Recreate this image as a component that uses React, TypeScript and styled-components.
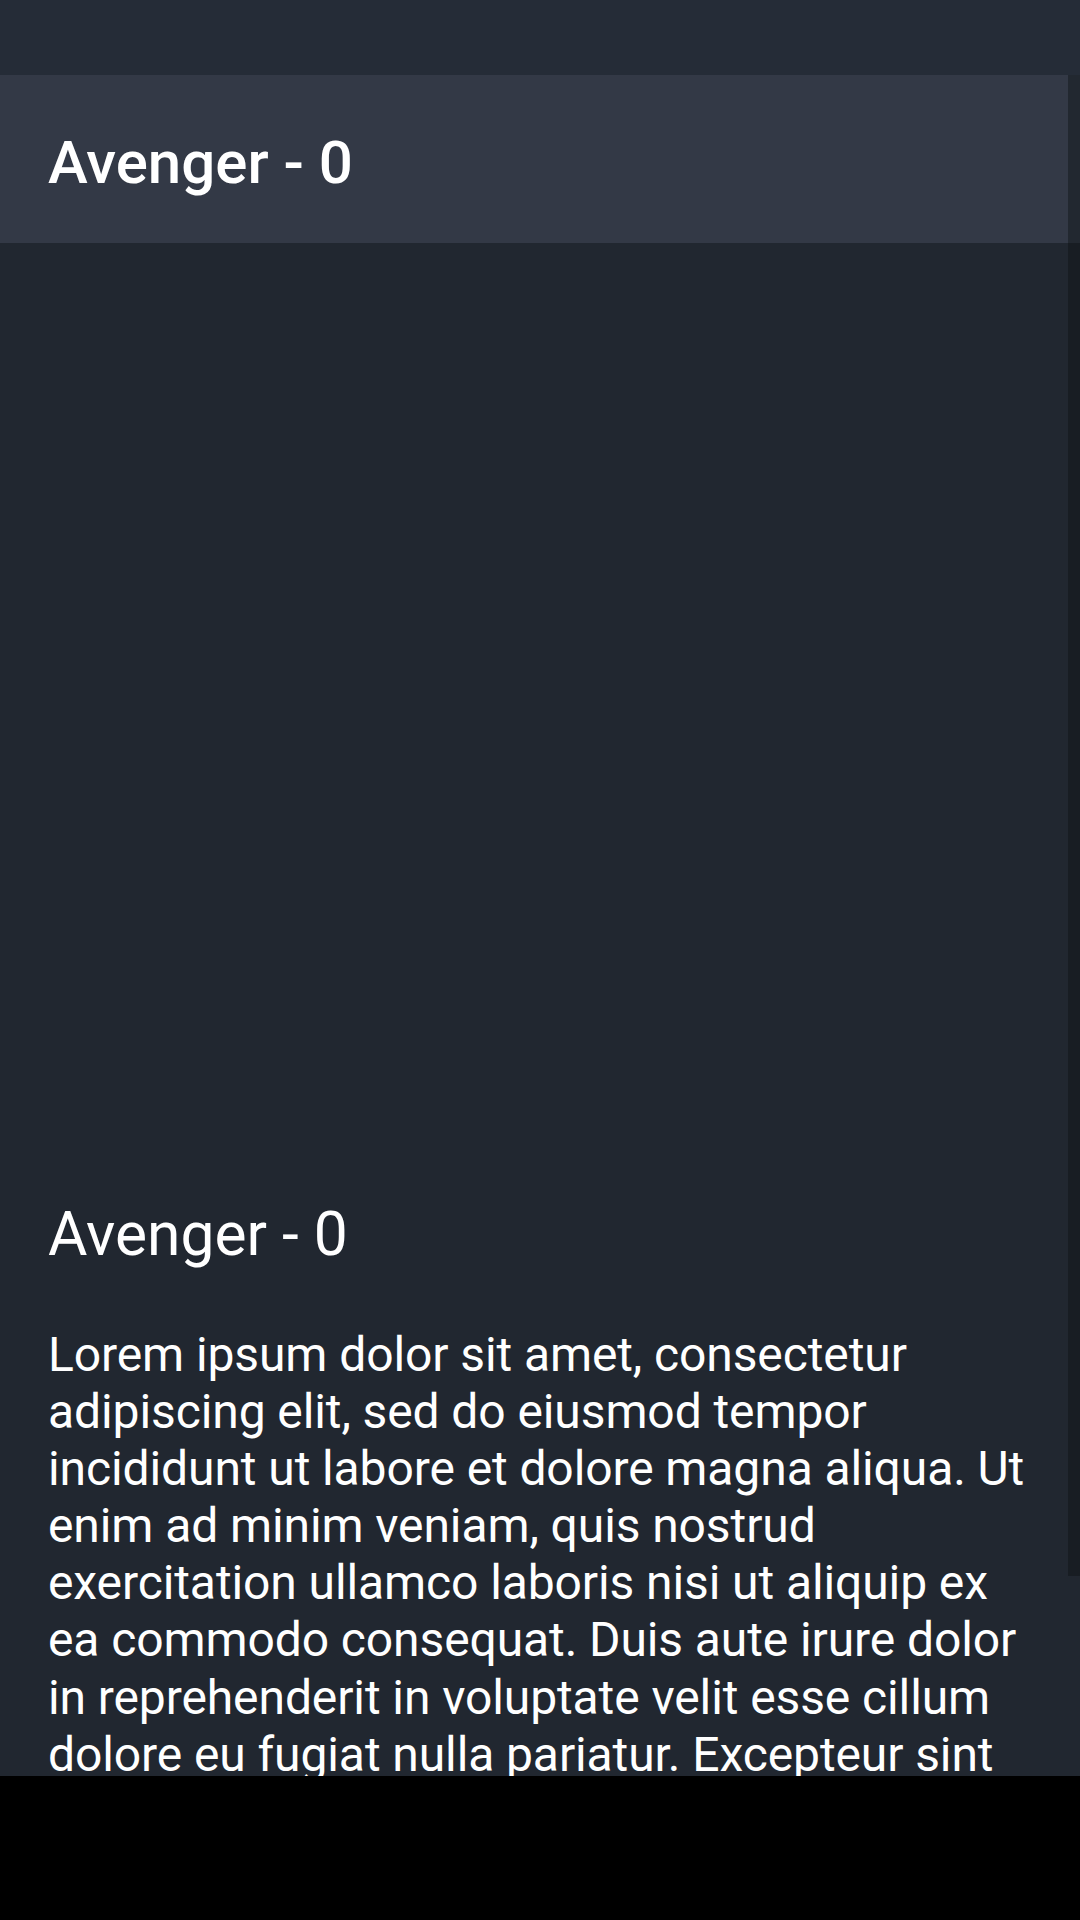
import React from "react";
import styled, { createGlobalStyle } from "styled-components";

const GlobalStyle = createGlobalStyle`
  html, body {
    margin: 0;
    padding: 0;
    background: #212730;
    font-family: Roboto, "Noto Sans", "Liberation Sans", sans-serif;
  }
  * { box-sizing: border-box; }
`;

const Screen = styled.div`
  width: 1080px;
  height: 1920px;
  display: flex;
  flex-direction: column;
  overflow: hidden;
  background: #212730;
`;

const StatusBar = styled.div`
  height: 75px;
  flex: none;
  background: #252c37;
`;

const ScrollArea = styled.main`
  position: relative;
  flex: 1;
  overflow: hidden;
  background: #212730;
`;

const Toolbar = styled.header`
  height: 168px;
  display: flex;
  align-items: center;
  padding: 6px 48px 0;
  background: #333946;
`;

const ToolbarTitle = styled.h1`
  margin: 0;
  font-size: 60px;
  font-weight: 500;
  color: #ffffff;
  line-height: normal;
`;

const Content = styled.section`
  display: flex;
  flex-direction: column;
  padding: 0 48px;
`;

const Media = styled.div`
  height: 900px;
`;

const CardTitle = styled.h2`
  margin: 57px 0 0;
  font-size: 60.5px;
  font-weight: 400;
  line-height: 70px;
  color: #ffffff;
`;

const Body = styled.p`
  margin: 56px 0 0;
  font-size: 48px;
  font-weight: 400;
  line-height: 57.1px;
  letter-spacing: -0.1px;
  color: #ffffff;
`;

const ScrollThumb = styled.div`
  position: absolute;
  top: 0;
  right: 0;
  width: 12px;
  height: 1501px;
  background: rgba(12, 16, 20, 0.42);
`;

const NavBar = styled.nav`
  height: 144px;
  flex: none;
  background: #000000;
`;

const lorem =
  "Lorem ipsum dolor sit amet, consectetur adipiscing elit, sed do eiusmod tempor incididunt ut labore et dolore magna aliqua. Ut enim ad minim veniam, quis nostrud exercitation ullamco laboris nisi ut aliquip ex ea commodo consequat. Duis aute irure dolor in reprehenderit in voluptate velit esse cillum dolore eu fugiat nulla pariatur. Excepteur sint occaecat cupidatat non proident, sunt in culpa qui officia deserunt mollit anim id est laborum.";

export default function App() {
  return (
    <>
      <GlobalStyle />
      <Screen>
        <StatusBar />
        <ScrollArea>
          <Toolbar>
            <ToolbarTitle>Avenger - 0</ToolbarTitle>
          </Toolbar>
          <Content>
            <Media />
            <CardTitle>Avenger - 0</CardTitle>
            <Body>{lorem}</Body>
          </Content>
          <ScrollThumb />
        </ScrollArea>
        <NavBar />
      </Screen>
    </>
  );
}
